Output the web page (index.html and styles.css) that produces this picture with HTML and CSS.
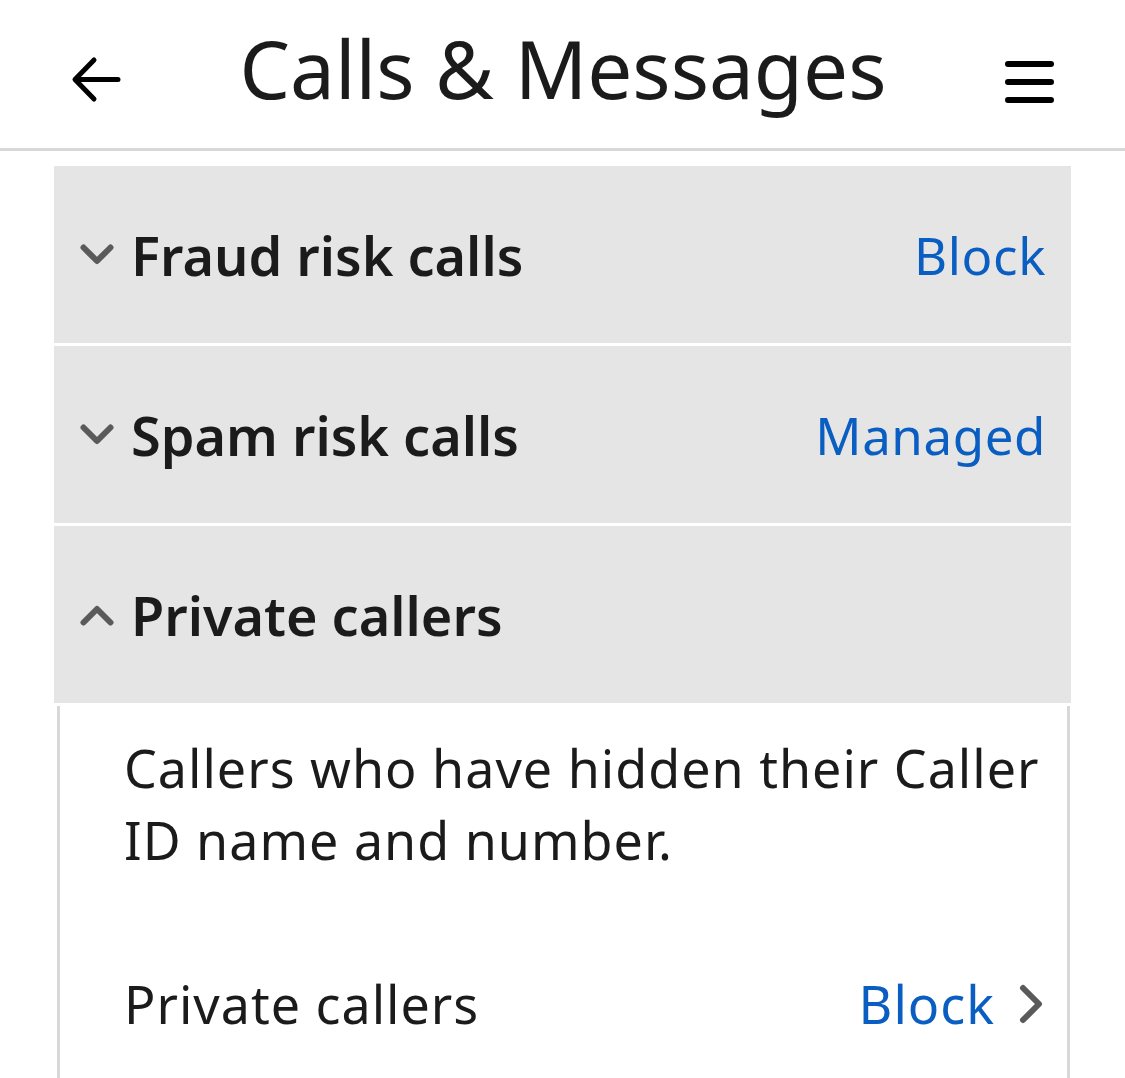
FILE: index.html
```html
<!DOCTYPE html>
<html lang="en">
<head>
<meta charset="utf-8">
<title>Calls &amp; Messages</title>
<link rel="stylesheet" href="styles.css">
</head>
<body>
<header class="topbar">
  <button class="icon-btn back" aria-label="Back">
    <svg width="50" height="48" viewBox="0 0 50 48"><path d="M47 23.5H5M23 4L4 23.5L23 43" fill="none" stroke="#000" stroke-width="5" stroke-linecap="round" stroke-linejoin="round"/></svg>
  </button>
  <h1 class="title">Calls &amp; Messages</h1>
  <button class="icon-btn menu" aria-label="Menu">
    <svg width="50" height="44" viewBox="0 0 50 44"><path d="M3 4H46M3 22H46M3 40H46" fill="none" stroke="#000" stroke-width="6" stroke-linecap="round"/></svg>
  </button>
</header>
<main class="content">
  <div class="acc-item">
    <svg class="chev" width="34" height="22" viewBox="0 0 34 22"><path d="M3.5 3.5L17 17L30.5 3.5" fill="none" stroke="#5a5a5a" stroke-width="6" stroke-linecap="round" stroke-linejoin="round"/></svg>
    <span class="acc-label">Fraud risk calls</span>
    <span class="acc-value">Block</span>
  </div>
  <div class="acc-item">
    <svg class="chev" width="34" height="22" viewBox="0 0 34 22"><path d="M3.5 3.5L17 17L30.5 3.5" fill="none" stroke="#5a5a5a" stroke-width="6" stroke-linecap="round" stroke-linejoin="round"/></svg>
    <span class="acc-label">Spam risk calls</span>
    <span class="acc-value">Managed</span>
  </div>
  <div class="acc-item">
    <svg class="chev" width="34" height="22" viewBox="0 0 34 22"><path d="M3.5 18.5L17 5L30.5 18.5" fill="none" stroke="#5a5a5a" stroke-width="6" stroke-linecap="round" stroke-linejoin="round"/></svg>
    <span class="acc-label">Private callers</span>
  </div>
  <div class="acc-body">
    <p class="desc">Callers who have hidden their Caller ID name and number.</p>
    <div class="setting-row">
      <span class="setting-label">Private callers</span>
      <span class="setting-value">Block</span>
      <svg class="chev-right" width="26" height="40" viewBox="0 0 26 40"><path d="M4 4L20 20L4 36" fill="none" stroke="#5a5a5a" stroke-width="6" stroke-linecap="round" stroke-linejoin="round"/></svg>
    </div>
  </div>
</main>
</body>
</html>
```
FILE: styles.css
```css
* { box-sizing: border-box; }
html, body { margin: 0; padding: 0; background: #fff; }
body {
  font-family: "Noto Sans", "Open Sans", sans-serif;
  color: #1b1b1b;
  width: 1125px;
  height: 1078px;
  overflow: hidden;
}
.topbar {
  height: 151px;
  border-bottom: 3px solid #d8d8d8;
  display: flex;
  align-items: center;
  padding: 0 70px 4px 71px;
}
.icon-btn {
  background: none;
  border: 0;
  padding: 0;
  display: flex;
  cursor: pointer;
}
.back { margin-top: 16px; }
.menu { margin-top: 20px; }
.title {
  flex: 1;
  margin: 0;
  text-align: center;
  font-weight: 400;
  font-size: 80px;
  line-height: 1;
  letter-spacing: 0;
  margin-top: -8px;
}
.content {
  padding: 15px 54px 0;
}
.acc-item {
  height: 177px;
  background: #e5e5e5;
  margin-bottom: 3px;
  display: flex;
  align-items: center;
  padding: 0 25px 0 26px;
}
.chev { flex: none; margin-right: 17px; }
.acc-label {
  font-weight: 600;
  font-size: 54px;
  flex: 1;
}
.acc-value {
  color: #0a5ec2;
  font-size: 51px;
  letter-spacing: 0.6px;
}
.acc-body {
  margin: 0 1px 0 3px;
  border-left: 3px solid #d8d8d8;
  border-right: 3px solid #d8d8d8;
  padding: 26px 22px 60px 64px;
}
.desc {
  margin: 0;
  font-size: 52px;
  line-height: 72px;
  letter-spacing: 1px;
}
.setting-row {
  display: flex;
  align-items: center;
  margin-top: 92px;
  font-size: 52px;
  line-height: 72px;
  letter-spacing: 1px;
}
.setting-label { flex: 1; }
.setting-value { color: #0a5ec2; margin-right: 24px; }
.chev-right { flex: none; }
```
